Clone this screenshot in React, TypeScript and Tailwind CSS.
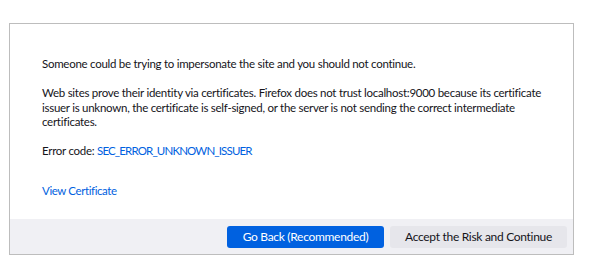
export default function App() {
  return (
    <div className="w-[602px] h-[274px] bg-white pt-[23px] pl-[9px]" style={{ fontFamily: 'Lato, "Noto Sans", sans-serif' }}>
      <div className="w-[565px] h-[232px] border border-[#bdbdbd] flex flex-col text-[11.5px] tracking-[-0.27px] text-[#15141a]">
        <div className="flex-1 pl-[32px] pr-[20px] pt-[33px]">
          <p className="leading-[14.5px]">Someone could be trying to impersonate the site and you should not continue.</p>
          <p className="leading-[14.5px] mt-[14.5px]">
            Web sites prove their identity via certificates. Firefox does not trust localhost:9000 because its certificate issuer is unknown, the certificate is self-signed, or the server is not sending the correct intermediate certificates.
          </p>
          <p className="leading-[14.5px] mt-[14px]">
            Error code: <span className="text-[#0061e0] tracking-[-0.85px]">SEC_ERROR_UNKNOWN_ISSUER</span>
          </p>
          <p className="leading-[14.5px] mt-[25.5px] text-[#0061e0] tracking-[-0.4px]">View Certificate</p>
        </div>
        <div className="h-[35px] bg-[#f0f0f4] flex items-center justify-end gap-[6px] pr-[6px]">
          <button className="h-[22px] w-[157px] rounded-[3px] bg-[#0061e0] text-white text-[12px] tracking-[-0.3px]">Go Back (Recommended)</button>
          <button className="h-[22px] w-[177px] rounded-[3px] bg-[#e6e6eb] text-[#15141a] text-[12px] tracking-[-0.3px]">Accept the Risk and Continue</button>
        </div>
      </div>
    </div>
  );
}
